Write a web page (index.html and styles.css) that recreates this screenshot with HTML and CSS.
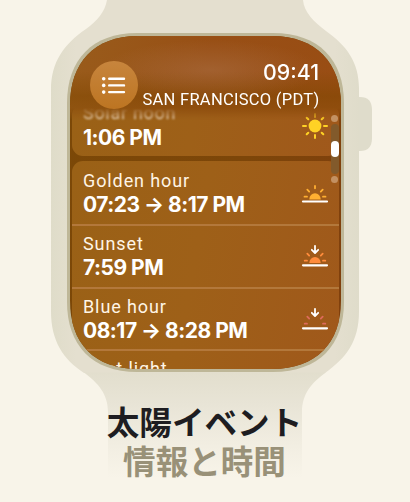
FILE: index.html
```html
<!DOCTYPE html>
<html lang="ja">
<head>
<meta charset="utf-8">
<title>太陽イベント</title>
<link rel="stylesheet" href="styles.css">
</head>
<body>
<main class="stage">
  <svg class="watch" width="410" height="502" viewBox="0 0 410 502" aria-hidden="true">
    <defs>
      <linearGradient id="band" gradientUnits="userSpaceOnUse" x1="0" y1="372" x2="0" y2="478">
        <stop offset="0" stop-color="#e2decd"/><stop offset=".3" stop-color="#e8e4d6"/><stop offset=".7" stop-color="#f2eee2"/><stop offset="1" stop-color="#f8f4e9"/>
      </linearGradient>
      <linearGradient id="case" x1="0" y1="0" x2="1" y2="0">
        <stop offset="0" stop-color="#dfdcc9"/><stop offset=".08" stop-color="#e4dfcf"/><stop offset=".92" stop-color="#e4dfcf"/><stop offset="1" stop-color="#dfdcca"/>
      </linearGradient>
    </defs>
    <path d="M350 97H360Q372 97 372 110V138Q372 151 360 151H350Z" fill="#dfdccb"/>
    <path d="M107 0H303C304 12 314 22 326 31C346 45 359 62 359 88V311C359 342 346 358 325 373H84C63 359 51 341 51 311V90C51 62 64 44 86 29C97 21 105 12 107 0Z" fill="url(#case)"/>
    <path d="M84 372.5H326C312 382 302 394 302 412V478H108V412C108 394 98 383 84 372.5Z" fill="url(#band)"/>
    <path d="M137 33H273C319 33 344 60 344 103V302C344 345 319 372 273 372H137C92 372 67 345 67 302V103C67 60 92 33 137 33Z" fill="#beb798"/>
  </svg>
  <section class="screen">
    <div class="card first">
      <div class="row">
        <div><div class="label noon">Solar noon</div><div class="time">1:06 PM</div></div>
        <svg class="icon" width="28" height="28" viewBox="0 0 28 28"><circle cx="14" cy="14" r="6.4" fill="#ffd225"/><g stroke="#ffd225" stroke-width="2" stroke-linecap="round"><path d="M2 14H5M23 14H26M14 23V26M5.7 5.7L7.3 7.3M22.3 5.7L20.7 7.3M5.7 22.3L7.3 20.7M22.3 22.3L20.7 20.7"/><path d="M14 2V5" opacity=".7"/></g></svg>
      </div>
    </div>
    <div class="card">
      <div class="row golden">
        <div><div class="label">Golden hour</div><div class="time">07:23 → 8:17 PM</div></div>
        <svg class="icon" width="28" height="28" viewBox="0 0 28 28"><path d="M8.3 21.5a5.7 6.2 0 1 1 11.4 0Z" fill="#ffaf32"/><path d="M14 8V10.3M3.5 18.7H6M22 18.7H24.5M6.3 11.7L8.2 13.6M21.7 11.7L19.8 13.6" stroke="#ffaf32" stroke-width="1.8" stroke-linecap="round"/><path d="M2 23.5H26" stroke="#fff" stroke-width="2.2" stroke-linecap="round"/></svg>
      </div>
      <div class="row">
        <div><div class="label">Sunset</div><div class="time">7:59 PM</div></div>
        <svg class="icon" width="28" height="28" viewBox="0 0 28 28"><path d="M8.3 21a5.7 6 0 1 1 11.4 0Z" fill="#ff8c3c"/><path d="M3.7 18.7H6M22 18.7H24.3M6.3 11.7L8.2 13.6M21.7 11.7L19.8 13.6" stroke="#ff8c3c" stroke-width="1.8" stroke-linecap="round"/><path d="M2 23.3H26" stroke="#fff" stroke-width="2.2" stroke-linecap="round"/><path d="M14 3.8V10.4M10.8 7.8L14 11L17.2 7.8" fill="none" stroke="#fff" stroke-width="1.8" stroke-linecap="round" stroke-linejoin="round"/></svg>
      </div>
      <div class="row">
        <div><div class="label">Blue hour</div><div class="time">08:17 → 8:28 PM</div></div>
        <svg class="icon" width="28" height="28" viewBox="0 0 28 28"><path d="M3.7 18.7H6M22 18.7H24.3M6.3 11.7L8.2 13.6M21.7 11.7L19.8 13.6" stroke="#dd6b5b" stroke-width="1.8" stroke-linecap="round"/><path d="M2 23.3H26" stroke="#fff" stroke-width="2.2" stroke-linecap="round"/><path d="M14 3.8V10.4M10.8 7.8L14 11L17.2 7.8" fill="none" stroke="#fff" stroke-width="1.8" stroke-linecap="round" stroke-linejoin="round"/></svg>
      </div>
      <div class="row">
        <div><div class="label">First light</div></div>
      </div>
    </div>
    <header class="header">
      <div class="menu"><svg width="48" height="48" viewBox="0 0 48 48"><g fill="#fff"><circle cx="13.7" cy="17.7" r="1.8"/><circle cx="13.7" cy="24.4" r="1.8"/><circle cx="13.7" cy="31.1" r="1.8"/></g><path d="M19.2 17.7H34M19.2 24.4H34M19.2 31.1H34" stroke="#fff" stroke-width="2.4" stroke-linecap="round"/></svg></div>
      <div class="heading"><div class="clock">09:41</div><div class="city">SAN FRANCISCO (PDT)</div></div>
    </header>
    <div class="scroll"><i class="dot"></i><div class="track"><div class="thumb"></div></div><i class="dot"></i></div>
  </section>
  <div class="caption"><h1>太陽イベント</h1><p>情報と時間</p></div>
</main>
</body>
</html>
```
FILE: styles.css
```css
* { box-sizing: border-box; }
body { margin: 0; background: #f8f4e9; font-family: Inter, "Noto Sans CJK JP", sans-serif; }
.stage { position: relative; width: 410px; height: 502px; overflow: hidden; padding: 36px 69px 0 70px; }
.watch { position: absolute; left: 0; top: 0; }
.screen {
  position: relative; width: 271px; height: 333px; padding: 68px 2px 0; color: #fff;
  background: linear-gradient(100deg, #7b4807, #7d4609 60%, #803f0d);
  clip-path: path("M68 0H202C246 0 271 27 271 69V265C271 307 246 333 202 333H68C24 333 0 307 0 265V69C0 27 24 0 68 0Z");
}
.card { border-radius: 11px; background: linear-gradient(100deg, #9a6116 0%, #9e6018 45%, #a0581b 100%); overflow: hidden; }
.first { height: 52px; margin-bottom: 5px; }
.row { display: flex; justify-content: space-between; height: 62.5px; padding: 7px 10px 0 11px; }
.row + .row { box-shadow: inset 0 2px #b3783b; }
.card .golden { height: 63px; }
.first .row { height: 52px; padding-top: 0; }
.icon { flex: none; margin-top: 11px; }
.golden .icon { margin-top: 10px; }
.first .icon { margin-top: 8px; }
.label { height: 24px; line-height: 25px; font-family: Roboto, sans-serif; font-size: 18px; letter-spacing: .9px; white-space: nowrap; color: #fff5e6; }
.noon { height: 21px; line-height: 18px; letter-spacing: .7px; filter: blur(.8px); opacity: .85; }
.time { line-height: 26px; font-size: 21px; font-weight: 700; letter-spacing: -.5px; white-space: nowrap; }
.header {
  position: absolute; inset: 0 0 auto; height: 84px; display: flex; justify-content: space-between; padding: 25px 21px 0 20px;
  -webkit-mask: linear-gradient(#000 72px, transparent 84px);
  mask: linear-gradient(#000 72px, transparent 84px);
  background: radial-gradient(ellipse 110px 30px at 52% 34px, #ad744c77, transparent), linear-gradient(transparent 35px, #7f470088 60px, #8f530e88 84px), linear-gradient(100deg, #995c1b, #984f15 50%, #994d14);
}
.menu { flex: none; width: 48px; height: 48px; border-radius: 50%; background: linear-gradient(#c7853d, #bd7522); }
.menu svg { display: block; }
.heading { text-align: right; white-space: nowrap; }
.clock { height: 28px; line-height: 22px; font-size: 21.3px; font-weight: 500; margin-right: 1px; }
.city { line-height: 22px; font-family: Roboto, sans-serif; font-size: 16.5px; letter-spacing: .28px; margin-right: .5px; }
.scroll { position: absolute; right: 2px; top: 79px; display: flex; flex-direction: column; align-items: center; gap: 2px; width: 9px; }
.dot { width: 7px; height: 7px; border-radius: 50%; background: #c39162; }
.track { width: 8px; height: 50px; padding-top: 17px; border-radius: 4px; background: #825a2b; }
.thumb { height: 16px; border-radius: 4px; background: #fff; }
.caption { position: relative; margin: 32px -60px 0 -62px; text-align: center; font-family: "Noto Sans CJK JP", sans-serif; font-weight: 700; }
.caption h1, .caption p { margin: 0; font-size: 32.6px; line-height: 39px; font-weight: 700; color: #1e1d21; }
.caption p { color: #999178; }
```
